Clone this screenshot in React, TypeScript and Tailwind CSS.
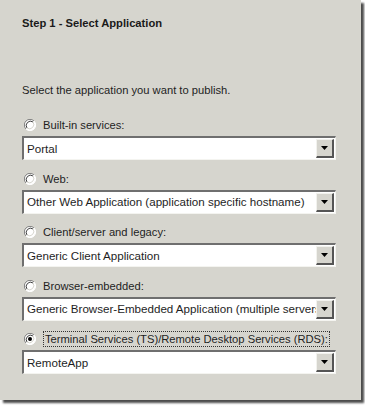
import React from "react";

const FONT = { fontFamily: '"Liberation Sans", Arial, sans-serif' };

const OPTIONS = [
  { label: "Built-in services:", value: "Portal", checked: false },
  { label: "Web:", value: "Other Web Application (application specific hostname)", checked: false },
  { label: "Client/server and legacy:", value: "Generic Client Application", checked: false },
  { label: "Browser-embedded:", value: "Generic Browser-Embedded Application (multiple servers)", checked: false },
  { label: "Terminal Services (TS)/Remote Desktop Services (RDS):", value: "RemoteApp", checked: true },
];

function Radio({ checked }: { checked: boolean }) {
  return (
    <svg width="12" height="12" viewBox="0 0 12 12" className="shrink-0">
      <circle cx="6" cy="6" r="5.5" fill="#ffffff" />
      <path d="M10 2 A5.5 5.5 0 0 0 2 10" fill="none" stroke="#808080" strokeWidth="1" />
      <path d="M9 3 A4.3 4.3 0 0 0 3 9" fill="none" stroke="#404040" strokeWidth="1" />
      <path d="M2 10 A5.5 5.5 0 0 0 10 2" fill="none" stroke="#ffffff" strokeWidth="1" />
      <path d="M3 9 A4.3 4.3 0 0 0 9 3" fill="none" stroke="#d6d5ce" strokeWidth="1" />
      {checked ? <circle cx="6" cy="6" r="2" fill="#000000" /> : null}
    </svg>
  );
}

function Combo({ value }: { value: string }) {
  return (
    <div className="flex h-[24px] w-[314px] border-t-2 border-l-2 border-t-[#6f6f6f] border-l-[#6f6f6f] border-b border-r border-b-[#f4f4f0] border-r-[#f4f4f0] bg-white">
      <div className="flex min-w-0 flex-1 items-center overflow-hidden whitespace-nowrap pl-[3px] text-[11.6px] text-[#1e1e1e]">
        {value}
      </div>
      <div className="my-px mr-px flex w-[18px] shrink-0 items-center justify-center border-t border-l border-t-[#f2f2ee] border-l-[#f2f2ee] border-b-2 border-r-2 border-b-[#555555] border-r-[#555555] bg-[#d6d5ce]">
        <svg width="7" height="4" viewBox="0 0 7 4">
          <path d="M0 0 H7 L3.5 4 Z" fill="#000000" />
        </svg>
      </div>
    </div>
  );
}

export default function App() {
  return (
    <div className="h-[407px] w-[365px] bg-white" style={FONT}>
      <div className="h-[400px] w-[361px] bg-[#d6d5ce] pl-[22px] pt-[15px] shadow-[3px_3px_2px_rgba(0,0,0,0.7)]">
        <h1 className="text-[11.2px] font-bold leading-[16px] text-[#1a1a1a]">Step 1 - Select Application</h1>
        <p className="mt-[51px] text-[11.2px] leading-[16px] text-[#1e1e1e]">
          Select the application you want to publish.
        </p>
        <div className="mt-[19px] flex flex-col gap-[10.5px]">
          {OPTIONS.map((option) => (
            <div key={option.label} className="flex flex-col gap-[3px]">
              <div className="flex h-[16px] items-center gap-[7px] pl-[2px]">
                <Radio checked={option.checked} />
                <span
                  className={
                    option.checked
                      ? "whitespace-nowrap border border-dotted border-[#333333] px-px text-[11.2px] leading-[14px] text-[#1e1e1e]"
                      : "whitespace-nowrap text-[11.2px] leading-[16px] text-[#1e1e1e]"
                  }
                >
                  {option.label}
                </span>
              </div>
              <Combo value={option.value} />
            </div>
          ))}
        </div>
      </div>
    </div>
  );
}
